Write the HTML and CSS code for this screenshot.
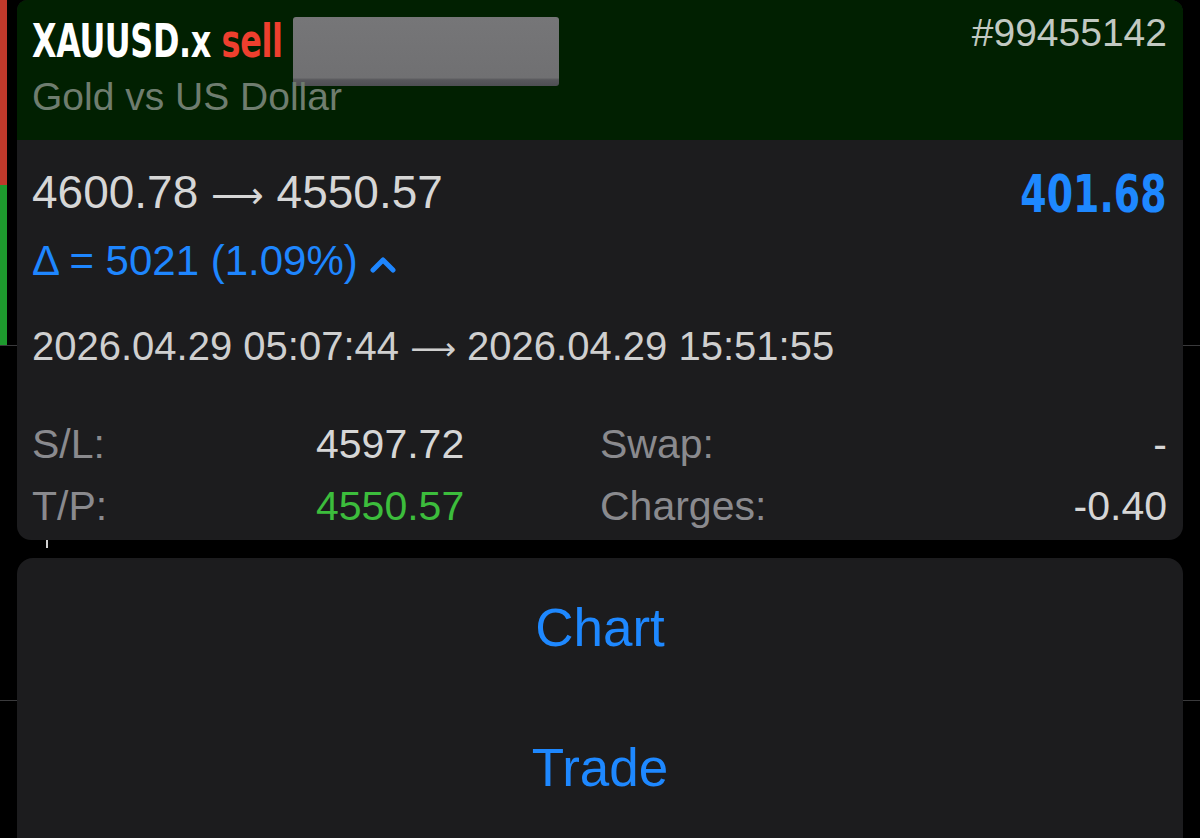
FILE: index.html
```html
<!DOCTYPE html>
<html>
<head>
<meta charset="utf-8">
<link rel="stylesheet" href="styles.css">
</head>
<body>
<div class="screen">
  <div class="gutter gutter-left">
    <div class="strip strip-red"></div>
    <div class="strip strip-green"></div>
    <div class="sep sep-a"></div>
    <div class="sep sep-b"></div>
  </div>
  <div class="main">
    <div class="card">
      <div class="card-head">
        <div class="title-row">
          <div class="title"><span class="sym">XAUUSD.x</span> <span class="side">sell</span></div>
          <div class="redact"></div>
          <div class="ticket">#99455142</div>
        </div>
        <div class="desc">Gold vs US Dollar</div>
      </div>
      <div class="card-body">
        <div class="price-row">
          <div class="prices">4600.78 <span class="arrow">⟶</span> 4550.57</div>
          <div class="profit">401.68</div>
        </div>
        <div class="delta">Δ = 5021 (1.09%)
          <svg class="chev" width="26" height="18" viewBox="0 0 26 18"><path d="M3 15 L13 5 L23 15" fill="none" stroke="#1e86ff" stroke-width="5" stroke-linecap="round" stroke-linejoin="round"/></svg>
        </div>
        <div class="times">2026.04.29 05:07:44 <span class="arrow">⟶</span> 2026.04.29 15:51:55</div>
        <div class="stats">
          <div class="lbl">S/L:</div>
          <div class="val">4597.72</div>
          <div class="lbl">Swap:</div>
          <div class="val right">-</div>
          <div class="lbl">T/P:</div>
          <div class="val green">4550.57</div>
          <div class="lbl">Charges:</div>
          <div class="val right">-0.40</div>
        </div>
      </div>
    </div>
    <div class="gap"><div class="tick"></div></div>
    <div class="sheet">
      <div class="action">Chart</div>
      <div class="action">Trade</div>
    </div>
  </div>
  <div class="gutter gutter-right">
    <div class="sep sep-a"></div>
    <div class="sep sep-b"></div>
  </div>
</div>
</body>
</html>
```
FILE: styles.css
```css
html, body {
  margin: 0;
  padding: 0;
  background: #000;
}
body {
  width: 1200px;
  height: 838px;
  overflow: hidden;
  font-family: "Liberation Sans", Arial, sans-serif;
}
.screen {
  display: grid;
  grid-template-columns: 17px 1166px 17px;
  height: 838px;
}
.gutter {
  display: flex;
  flex-direction: column;
}
.strip {
  width: 7px;
}
.strip-red {
  height: 185px;
  background: #c0392b;
}
.strip-green {
  height: 160px;
  background: #1e9a2e;
}
.sep {
  height: 1px;
  background: #3a3a3c;
}
.gutter-right .sep-a {
  margin-top: 345px;
}
.sep-b {
  margin-top: 354px;
}
.main {
  display: flex;
  flex-direction: column;
}
.card {
  height: 540px;
  border-radius: 10px 12px 14px 14px;
  overflow: hidden;
  background: #1c1c1e;
  display: flex;
  flex-direction: column;
}
.card-head {
  height: 140px;
  background: #012001;
  box-sizing: border-box;
  padding: 13px 16px 0 15px;
}
.title-row {
  display: flex;
  align-items: flex-start;
  height: 56px;
}
.title {
  font-family: "DejaVu Sans Condensed", "DejaVu Sans", sans-serif;
  font-weight: bold;
  font-size: 46px;
  line-height: 56px;
  color: #fff;
  letter-spacing: -0.5px;
  white-space: nowrap;
  transform: scaleX(0.77);
  transform-origin: left center;
  margin-right: -75px;
}
.side {
  color: #ee3f2e;
}
.redact {
  margin-left: 11px;
  margin-top: 4px;
  width: 266px;
  height: 69px;
  border-radius: 3px;
  background: linear-gradient(#767678 0%, #707072 88%, #58585c 91%, #4e4e54 100%);
  flex: none;
}
.ticket {
  margin-left: auto;
  font-size: 39px;
  line-height: 40px;
  color: #c2c9c2;
}
.desc {
  margin-top: 5px;
  font-size: 39px;
  line-height: 46px;
  color: #6f7d6f;
}
.card-body {
  padding: 25px 16px 0 15px;
  display: flex;
  flex-direction: column;
}
.price-row {
  display: flex;
  justify-content: space-between;
  align-items: flex-start;
  height: 54px;
}
.prices {
  font-size: 46px;
  line-height: 54px;
  color: #d6d6d6;
}
.arrow {
  font-family: "DejaVu Sans", sans-serif;
  font-size: 0.8em;
}
.profit {
  font-family: "DejaVu Sans Condensed", "DejaVu Sans", sans-serif;
  font-weight: bold;
  font-size: 52px;
  line-height: 54px;
  margin-top: 2px;
  color: #1e88ff;
  transform: scaleX(0.81);
  transform-origin: right center;
}
.delta {
  margin-top: 17px;
  font-size: 42px;
  line-height: 50px;
  color: #1e86ff;
  display: flex;
  align-items: center;
  gap: 12px;
}
.chev {
  margin-top: 6px;
}
.times {
  margin-top: 35px;
  font-size: 40px;
  line-height: 50px;
  color: #cfcfcf;
}
.stats {
  margin-top: 39px;
  display: grid;
  grid-template-columns: 284px 284px 1fr auto;
  font-size: 41px;
  line-height: 62px;
}
.lbl {
  color: #8a8a8e;
}
.val {
  color: #d6d6d6;
}
.val.right {
  text-align: right;
}
.val.green {
  color: #3cbd3c;
}
.gap {
  height: 18px;
}
.tick {
  margin-left: 29px;
  width: 2px;
  height: 8px;
  background: #d0d0d0;
}
.sheet {
  flex: 1;
  background: #1c1c1e;
  border-radius: 16px 16px 0 0;
  display: flex;
  flex-direction: column;
}
.action {
  height: 140px;
  text-align: center;
  font-size: 53px;
  line-height: 140px;
  color: #1e88ff;
}
```
